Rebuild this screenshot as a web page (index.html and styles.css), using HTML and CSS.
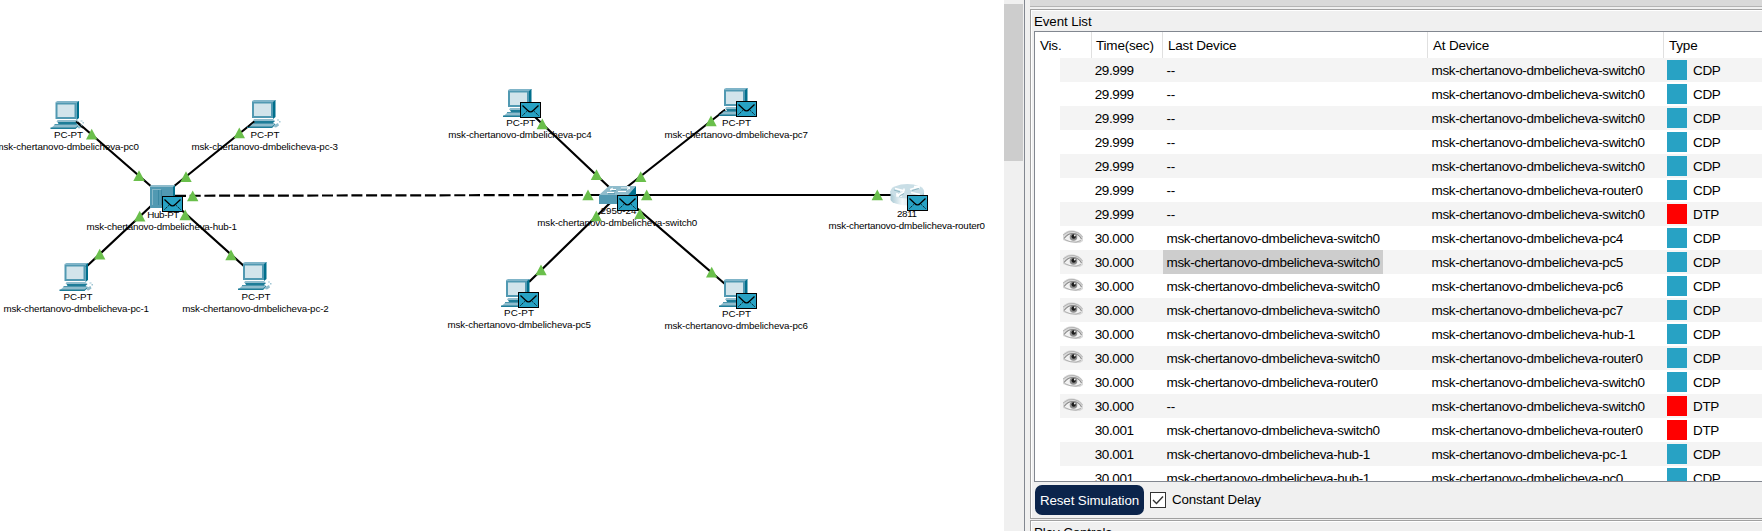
FILE: index.html
```
<!DOCTYPE html>
<html lang="en">
<head>
<meta charset="utf-8">
<title>Simulation</title>
<link rel="stylesheet" href="styles.css">
</head>
<body>
<main class="workspace">
<svg class="topology" width="1004" height="531" viewBox="0 0 1004 531">
<defs>
<g id="pc">
<path d="M5 1 7 0H29L27 2H5Z" fill="#7fb4c8"/>
<path d="M26 2 28.500 0V17L26 19Z" fill="#006f8c"/>
<path d="M5 2H26V18H5Z" fill="#5199b2"/>
<path d="M7 3.500H24V16H7Z" fill="#d2e4eb"/>
<path d="M7 19H26L28 21H6Z" fill="#92bdcd"/>
<path d="M7 21H28L26 23H8Z" fill="#1f7d98"/>
<path d="M4 23H28L25 24.500H4Z" fill="#4c97ae"/>
<path d="M4 24 27 24 25 27.500H0Z" fill="#8fbccc"/>
<path d="M0 26.500H25L28 23.500V25L25 28H0Z" fill="#1f7d98"/>
<path d="M28 24.500 31 23 32 25.500 29 27.500 27 27Z" fill="#8fbccc"/>
<path d="M30 19.500h2v1h-2zM32 21h1.500v1.500H32z" fill="#9fc6d4"/>
</g>
<g id="mail">
<rect x=".5" y=".5" width="20" height="15" fill="#28a2c4" stroke="#000"/>
<path d="M2.500 3.500 7.500 8.200Q10.500 11.500 13.500 8.200L18.500 3.500" fill="none" stroke="#000" stroke-width="1.300"/>
<path d="M2.500 13.500 6.700 9.500M18.500 13.500 14.300 9.500" fill="none" stroke="#000" stroke-width="1" stroke-dasharray="1.400 1"/>
</g>
<path id="up" d="M0-10.500 5.700 .2H-5.700Z" fill="#6abf4b"/>
<linearGradient id="metal"><stop offset="0" stop-color="#a9c9d4"/><stop offset=".35" stop-color="#f4f9fb"/><stop offset="1" stop-color="#a6c8d4"/></linearGradient>
</defs>

<g class="labels">
<text x="54" y="138" textLength="29">PC-PT</text><text x="-4.500" y="150" textLength="143.500">msk-chertanovo-dmbelicheva-pc0</text>
<text x="250.500" y="138" textLength="29">PC-PT</text><text x="191.500" y="150" textLength="146.500">msk-chertanovo-dmbelicheva-pc-3</text>
<text x="63.500" y="300" textLength="29">PC-PT</text><text x="3.500" y="312" textLength="145.500">msk-chertanovo-dmbelicheva-pc-1</text>
<text x="241.500" y="300" textLength="29">PC-PT</text><text x="182.300" y="312" textLength="146.500">msk-chertanovo-dmbelicheva-pc-2</text>
<text x="147.300" y="218" textLength="32">Hub-PT</text><text x="86.500" y="230" textLength="150.500">msk-chertanovo-dmbelicheva-hub-1</text>
<text x="506.300" y="126" textLength="29">PC-PT</text><text x="448.300" y="138" textLength="143.500">msk-chertanovo-dmbelicheva-pc4</text>
<text x="722" y="126" textLength="29">PC-PT</text><text x="664.500" y="138" textLength="143.500">msk-chertanovo-dmbelicheva-pc7</text>
<text x="504" y="316" textLength="30">PC-PT</text><text x="447.500" y="328" textLength="143.500">msk-chertanovo-dmbelicheva-pc5</text>
<text x="722" y="317" textLength="29">PC-PT</text><text x="664.500" y="329" textLength="143.500">msk-chertanovo-dmbelicheva-pc6</text>
<text x="600.500" y="214" textLength="36">2950-24</text><text x="537.300" y="226" textLength="160">msk-chertanovo-dmbelicheva-switch0</text>
<text x="897" y="217" textLength="20">2811</text><text x="828.500" y="229" textLength="156.500">msk-chertanovo-dmbelicheva-router0</text>
</g>

<g class="links">
<path d="M76 121 153 188M255 121 173 187M151 206 86 267M177 206 245 267"/>
<path class="crossover" d="M175 195.800 590 195"/>
<path d="M590 195H600M535 117 610 188M725 110 627 187M529 282 610 203M632 204 725 284M635 195H892"/>
</g>

<g class="devices">
<use href="#pc" x="50.500" y="101"/><use href="#pc" x="247" y="100"/>
<use href="#pc" x="59.500" y="263"/><use href="#pc" x="238" y="262"/>
<use href="#pc" x="503" y="89"/><use href="#pc" x="719" y="88"/>
<use href="#pc" x="501" y="279"/><use href="#pc" x="719" y="279"/>
<path d="M76 121.500 83 128M248 127 254 121.500M719 114 725 109.500" stroke="#000" stroke-width="1.500"/>
<g>
<path d="M150 186 151 185H175V187H150Z" fill="#8fbccc"/><path d="M150 187H173V208H150Z" fill="#5199b2"/>
<path d="M173 187 175 185V206L173 208Z" fill="#006f8c"/>
<path d="M152.500 189.500V205M152 189.500H161" stroke="#86b8c9" fill="none"/>
<path d="M158.500 190V205M161.500 190V205" stroke="#3a88a2" fill="none"/>
</g>
<g>
<path d="M609 186H636L628 195H599Z" fill="#8fbccc"/><path d="M599 195H628V204H599Z" fill="#5199b2"/>
<path d="M636 186V195L628 204V195Z" fill="#006f8c"/>
<path d="M610 189.500H616M621 188H630M607 192.500H614M618 191.500H626M613 188 610 189.500 612 191M627 186.500 630 188 627 189.500" stroke="#fff" fill="none"/>
<path d="M611 190.700H616M608 193.700H615M621 189.200H627" stroke="#40879d" stroke-width=".7" fill="none"/>
</g>
<g>
<path d="M890.500 191V200A17 6.500 0 0 0 924 200V191Z" fill="url(#metal)"/>
<ellipse cx="907.300" cy="191.300" rx="16.800" ry="7.200" fill="#c9dee6"/>
<path d="M895 188.500 903 190.500M900 190.800H904V188.500M918 187 910 189.500M914 186.500H919V188.500M904 192 897 195.500M897 193V196H902M911 192.500 920 194.500" stroke="#fff" stroke-width="1.600" fill="none"/>
<path d="M894 190 900 191.800M912 190.500 919 188.500M904 193.500 899 196.500" stroke="#82aebb" stroke-width=".8" fill="none"/>
</g>
</g>

<g class="ports">
<use href="#up" x="91.700" y="139.300"/><use href="#up" x="139" y="180.700"/><use href="#up" x="239.300" y="138"/>
<use href="#up" x="186" y="181.700"/><use href="#up" x="192.700" y="201"/><use href="#up" x="139.700" y="221.300"/>
<use href="#up" x="185.200" y="220"/><use href="#up" x="99.700" y="259.300"/><use href="#up" x="231" y="260"/>
<use href="#up" x="542.300" y="129"/><use href="#up" x="596.500" y="179.700"/><use href="#up" x="711" y="126"/>
<use href="#up" x="640.700" y="181.700"/><use href="#up" x="588" y="200"/><use href="#up" x="646.700" y="200"/>
<use href="#up" x="596.300" y="221"/><use href="#up" x="640" y="218.700"/><use href="#up" x="541" y="275"/>
<use href="#up" x="711.700" y="277.300"/><use href="#up" x="877.300" y="200"/>
</g>
<g class="messages">
<use href="#mail" x="162" y="196"/><use href="#mail" x="520" y="102"/><use href="#mail" x="736" y="101"/>
<use href="#mail" x="518" y="292"/><use href="#mail" x="736" y="293"/><use href="#mail" x="617" y="195"/><use href="#mail" x="907" y="195"/>
</g>
</svg>
</main>
<div class="scrollbar"><div class="thumb"></div></div>
<aside class="panel">
<svg class="symbols" width="0" height="0"><defs>
<filter id="soft"><feGaussianBlur stdDeviation=".4"/></filter>
<g id="eye" filter="url(#soft)">
<path d="M0 4.500Q4-.5 11 .5 18 2 20 7V11L17 13H13L4 11.500 0 10Z" fill="#dadada"/>
<path d="M1.500 9Q5 3 10.500 3.500 16 4.500 18.500 9 15 12 10 11.500 5 11.500 1.500 9Z" fill="#f2f2f2"/>
<path d="M0 5Q5 .5 11 1.500 17 2.500 19.500 7" fill="none" stroke="#b4b4b4"/>
<path d="M1 8.500Q5 3 10.500 3.500 16 4 18.500 9" fill="none" stroke="#8a8a8a" stroke-width="1.100"/>
<path d="M1.500 9.500Q7 12.500 13 12.200L18 10.500" fill="none" stroke="#b0b0b0"/>
<circle cx="10.500" cy="7" r="3.800" fill="#8e8e8e"/><circle cx="10.700" cy="6.500" r="2.200" fill="#1b1b1b"/><circle cx="11.800" cy="5.500" r=".9" fill="#eee"/>
</g></defs></svg>
<div class="upper-strip"></div>
<section class="group events">
<h2 class="caption">Event List</h2>
<div class="table">
<div class="row head"><span>Vis.</span><span>Time(sec)</span><span>Last Device</span><span>At Device</span><span>Type</span></div>
<div class="row"><i></i><span>29.999</span><span>--</span><span>msk-chertanovo-dmbelicheva-switch0</span><span class="type"><b class="cdp"></b>CDP</span></div>
<div class="row"><i></i><span>29.999</span><span>--</span><span>msk-chertanovo-dmbelicheva-switch0</span><span class="type"><b class="cdp"></b>CDP</span></div>
<div class="row"><i></i><span>29.999</span><span>--</span><span>msk-chertanovo-dmbelicheva-switch0</span><span class="type"><b class="cdp"></b>CDP</span></div>
<div class="row"><i></i><span>29.999</span><span>--</span><span>msk-chertanovo-dmbelicheva-switch0</span><span class="type"><b class="cdp"></b>CDP</span></div>
<div class="row"><i></i><span>29.999</span><span>--</span><span>msk-chertanovo-dmbelicheva-switch0</span><span class="type"><b class="cdp"></b>CDP</span></div>
<div class="row"><i></i><span>29.999</span><span>--</span><span>msk-chertanovo-dmbelicheva-router0</span><span class="type"><b class="cdp"></b>CDP</span></div>
<div class="row"><i></i><span>29.999</span><span>--</span><span>msk-chertanovo-dmbelicheva-switch0</span><span class="type"><b class="dtp"></b>DTP</span></div>
<div class="row"><i><svg class="eye"><use href="#eye"/></svg></i><span>30.000</span><span>msk-chertanovo-dmbelicheva-switch0</span><span>msk-chertanovo-dmbelicheva-pc4</span><span class="type"><b class="cdp"></b>CDP</span></div>
<div class="row"><i><svg class="eye"><use href="#eye"/></svg></i><span>30.000</span><span class="selected">msk-chertanovo-dmbelicheva-switch0</span><span>msk-chertanovo-dmbelicheva-pc5</span><span class="type"><b class="cdp"></b>CDP</span></div>
<div class="row"><i><svg class="eye"><use href="#eye"/></svg></i><span>30.000</span><span>msk-chertanovo-dmbelicheva-switch0</span><span>msk-chertanovo-dmbelicheva-pc6</span><span class="type"><b class="cdp"></b>CDP</span></div>
<div class="row"><i><svg class="eye"><use href="#eye"/></svg></i><span>30.000</span><span>msk-chertanovo-dmbelicheva-switch0</span><span>msk-chertanovo-dmbelicheva-pc7</span><span class="type"><b class="cdp"></b>CDP</span></div>
<div class="row"><i><svg class="eye"><use href="#eye"/></svg></i><span>30.000</span><span>msk-chertanovo-dmbelicheva-switch0</span><span>msk-chertanovo-dmbelicheva-hub-1</span><span class="type"><b class="cdp"></b>CDP</span></div>
<div class="row"><i><svg class="eye"><use href="#eye"/></svg></i><span>30.000</span><span>msk-chertanovo-dmbelicheva-switch0</span><span>msk-chertanovo-dmbelicheva-router0</span><span class="type"><b class="cdp"></b>CDP</span></div>
<div class="row"><i><svg class="eye"><use href="#eye"/></svg></i><span>30.000</span><span>msk-chertanovo-dmbelicheva-router0</span><span>msk-chertanovo-dmbelicheva-switch0</span><span class="type"><b class="cdp"></b>CDP</span></div>
<div class="row"><i><svg class="eye"><use href="#eye"/></svg></i><span>30.000</span><span>--</span><span>msk-chertanovo-dmbelicheva-switch0</span><span class="type"><b class="dtp"></b>DTP</span></div>
<div class="row"><i></i><span>30.001</span><span>msk-chertanovo-dmbelicheva-switch0</span><span>msk-chertanovo-dmbelicheva-router0</span><span class="type"><b class="dtp"></b>DTP</span></div>
<div class="row"><i></i><span>30.001</span><span>msk-chertanovo-dmbelicheva-hub-1</span><span>msk-chertanovo-dmbelicheva-pc-1</span><span class="type"><b class="cdp"></b>CDP</span></div>
<div class="row"><i></i><span>30.001</span><span>msk-chertanovo-dmbelicheva-hub-1</span><span>msk-chertanovo-dmbelicheva-pc0</span><span class="type"><b class="cdp"></b>CDP</span></div>
</div>
<div class="controls">
<button class="reset">Reset Simulation</button>
<span class="check"><svg width="14" height="14" viewBox="0 0 14 14"><path d="M2 7 5.500 10.500 12 3.500" fill="none" stroke="#333" stroke-width="1.400"/></svg></span>
<span class="delay">Constant Delay</span>
</div>
</section>
<section class="group play"><h2 class="caption">Play Controls</h2></section>
</aside>
</body>
</html>
```
FILE: styles.css
```
* { box-sizing: border-box; }
body {
  margin: 0;
  width: 1762px;
  height: 531px;
  overflow: hidden;
  display: flex;
  background: #f0f0f0;
  color: #000;
  font: 13.5px/24px "Liberation Sans", Arial, sans-serif;
  letter-spacing: -0.37px;
}
.workspace { width: 1004px; height: 531px; background: #fff; overflow: hidden; }
.topology { display: block; }
.labels text { font: 9.8px "Liberation Sans", Arial, sans-serif; letter-spacing: 0; fill: #000; }
.links path { stroke: #000; stroke-width: 2.2; fill: none; }
.links .crossover { stroke-dasharray: 11 3.7; }
.scrollbar { width: 20px; padding-top: 4px; background: #f0f0f0; }
.thumb { width: 19px; height: 157px; background: #cdcdcd; }
.panel {
  flex: 1;
  height: 531px;
  overflow: hidden;
  border-left: 1px solid #828790;
  padding-left: 5px;
}
.symbols { display: block; }
.upper-strip { height: 7px; background: #d9d9d9; border-bottom: 1px solid #b4b4b4; margin-bottom: 2px; }
.group {
  border: 1px solid #a0a0a0;
  border-right: 0;
  box-shadow: inset 1px 1px #fff;
  padding: 1px 0 0 3px;
}
.events { height: 510px; }
.play { height: 60px; margin-top: 1px; }
.caption { margin: 0; height: 20px; font-size: 13.33px; font-weight: 400; line-height: 22px; letter-spacing: -0.1px; }
.table { height: 451px; border: 1px solid #828790; border-right: 0; background: #fff; overflow: hidden; }
.row {
  display: grid;
  grid-template-columns: 32px 71px 265px 236px 1fr;
  height: 24px;
  margin-left: 25px;
  line-height: 26px;
  white-space: nowrap;
}
.row:nth-child(even) { background: #f4f4f4; }
.row span { height: 24px; padding-left: 3.5px; }
.row i + span { padding-left: 2.7px; }
.row i { padding: 4px 0 0 3px; }
.eye { display: block; width: 21px; height: 15px; }
.row.head {
  height: 26px;
  margin-left: 0;
  grid-template-columns: 57px 71px 265px 236px 1fr;
  line-height: 28px;
  letter-spacing: -0.2px;
}
.head span { height: 26px; padding-left: 5px; border-right: 1px solid #e0e0e0; }
.head span:nth-child(2) { padding-left: 4px; }
.head span:last-child { border: 0; }
.row .selected { width: 220px; background: #cdcdcd; }
.row .type { display: flex; gap: 6px; padding-left: 3px; }
.type b { width: 20px; height: 20px; margin-top: 2px; }
.cdp { background: #28a2c4; }
.dtp { background: #f00; }
.controls { display: flex; align-items: center; height: 36px; padding-left: 1px; }
.reset {
  width: 109px;
  height: 30px;
  padding: 1px 0 0;
  border: 0;
  border-radius: 7px;
  background: #0b244b;
  color: #fff;
  font: 13.33px "Liberation Sans", Arial, sans-serif;
  letter-spacing: -0.1px;
}
.check { width: 16px; height: 16px; margin: 0 6px; border: 1px solid #333; background: #fff; line-height: 0; }
.delay { font-size: 13.33px; line-height: 26px; letter-spacing: -0.17px; }
```
